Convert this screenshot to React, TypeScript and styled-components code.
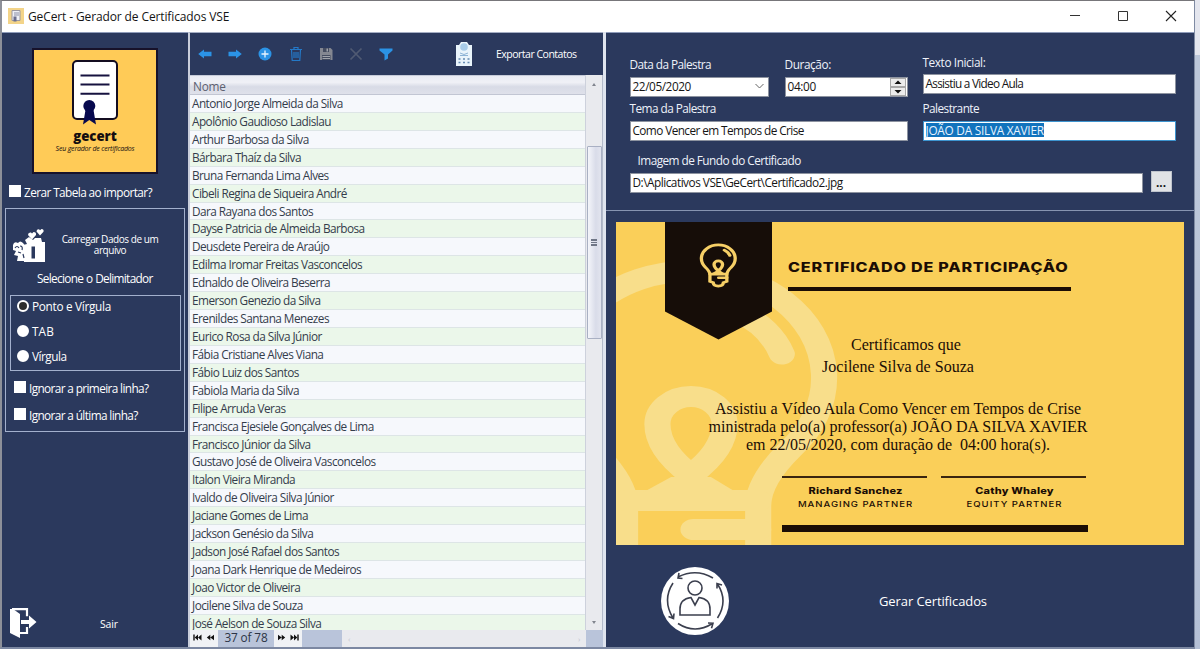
import React from 'react';
import styled, { createGlobalStyle } from 'styled-components';

const NAVY = '#2b395d';
const GOLD = '#facf59';
const INK = '#1b0d05';
const BLUE = '#2b93e6';

const GlobalStyle = createGlobalStyle`
  * { box-sizing: border-box; }
  body {
    margin: 0;
    overflow: hidden;
    font-family: "Open Sans", "Noto Sans", sans-serif;
    font-size: 11.8px;
    letter-spacing: -0.42px;
    color: #fff;
  }
`;

const Desktop = styled.div`
  width: 1200px;
  height: 649px;
  display: flex;
  background: linear-gradient(#e4e6ee 0 55px, #bcc7da 55px 150px, #b4c0d6 100%);
`;

const Window = styled.div`
  width: 1195px;
  height: 649px;
  display: flex;
  flex-direction: column;
  border: 1px solid #77767a;
  border-left: 2px solid #8d9099;
  border-right-color: #7f8ba3;
  border-bottom: 2px solid #7c88a2;
  background: ${NAVY};
`;

const TitleBar = styled.header`
  height: 31px;
  flex: none;
  display: flex;
  align-items: center;
  padding: 0 17px 1px 6px;
  background: #fff;
  color: #141414;
`;

const Title = styled.h1`
  flex: 1;
  margin: 0 0 0 4px;
  font-size: 12px;
  font-weight: 400;
  letter-spacing: -0.12px;
`;

const WindowButtons = styled.div`
  display: flex;
  gap: 36px;
  svg { display: block; }
`;

const Body = styled.div`
  flex: 1;
  min-height: 0;
  display: flex;
`;

const Sidebar = styled.aside`
  width: 186px;
  flex: none;
  display: flex;
  flex-direction: column;
  border-top: 1px solid #8f9cba;
`;

const Logo = styled.div`
  width: 126px;
  height: 126px;
  margin: 14.5px 0 0 30px;
  display: flex;
  flex-direction: column;
  align-items: center;
  border: 2px solid #17122a;
  background: #ffcb57;
  color: #140d10;
  svg { display: block; margin-top: 9px; }
`;

const LogoName = styled.div`
  font: 800 13.2px/16px "Open Sans", sans-serif;
  letter-spacing: -0.05px;
  margin-top: 3px;
`;

const LogoTagline = styled.div`
  font: italic 500 7px/10px "Open Sans", sans-serif;
  letter-spacing: -0.2px;
  white-space: nowrap;
`;

const Check = styled.label<{ $spacing?: number }>`
  display: flex;
  align-items: center;
  gap: 3px;
  height: 16px;
  white-space: nowrap;
  letter-spacing: ${p => p.$spacing ?? -0.62}px;
`;

const TopCheck = styled(Check)`
  margin: 10px 0 0 7px;
`;

const Box = styled.span`
  width: 12px;
  height: 12px;
  margin-top: -1px;
  background: #fff;
`;

const ImportPanel = styled.section`
  width: 180px;
  height: 224px;
  margin: 8px 0 0 3px;
  border: 1px solid #a3b0cd;
  display: flex;
  flex-direction: column;
`;

const ImportButton = styled.div`
  display: flex;
  align-items: center;
  height: 35px;
  margin: 19px 0 0 6px;
`;

const ImportText = styled.div`
  width: 124px;
  margin-left: 2px;
  text-align: center;
  font-size: 10px;
  line-height: 11.5px;
  letter-spacing: -0.44px;
`;

const DelimiterLabel = styled.div`
  margin: 7px 0 0 31px;
  line-height: 16px;
  letter-spacing: -0.68px;
  word-spacing: 0.4px;
  white-space: nowrap;
`;

const RadioBox = styled.div`
  width: 171px;
  height: 76px;
  margin: 9px 0 0 4px;
  padding: 2px 0 0 6px;
  border: 1px solid #a3b0cd;
  display: flex;
  flex-direction: column;
  gap: 9px;
  flex: none;
`;

const Dot = styled.span<{ $on?: boolean }>`
  width: 12px;
  height: 12px;
  border-radius: 50%;
  border: 2px solid #fff;
  background: ${p => (p.$on ? '#2e2e2e' : '#fff')};
`;

const PanelChecks = styled.div`
  margin: 9px 0 0 8px;
  display: flex;
  flex-direction: column;
  gap: 11px;
`;

const Exit = styled.div`
  margin: auto 0 8px 7px;
  display: flex;
  align-items: center;
  font-size: 10.5px;
  letter-spacing: -0.2px;
  svg { display: block; }
  span { margin: 2px 0 0 63px; }
`;

const ListPane = styled.main`
  width: 415px;
  flex: none;
  display: flex;
  flex-direction: column;
  border-left: 2px solid #c9cedb;
  border-top: 1px solid #a5aec4;
`;

const Toolbar = styled.div`
  height: 42px;
  flex: none;
  display: flex;
  align-items: center;
  padding-left: 7px;
  svg { display: block; flex: none; }
`;

const ToolIcons = styled.div`
  display: flex;
  gap: 14.2px;
  width: 258px;
`;

const ExportLabel = styled.span`
  margin-left: 23px;
  font-size: 10.5px;
  letter-spacing: -0.5px;
  white-space: nowrap;
`;

const GridArea = styled.div`
  flex: 1;
  min-height: 0;
  display: flex;
  background: #f7f9fb;
`;

const Names = styled.div`
  width: 395px;
  flex: none;
  overflow: hidden;
  color: #343c4b;
`;

const HeaderCell = styled.div`
  height: 20px;
  padding-left: 3px;
  line-height: 20px;
  letter-spacing: -0.25px;
  color: #5c6070;
  background: linear-gradient(#e9ebf3, #f0f1f6 35%, #d8dbe6 60%, #dfe1ea);
  border-top: 1px solid #c5cad8;
  border-bottom: 1px solid #c2c6d3;
`;

const NameRow = styled.div<{ $even: boolean }>`
  height: 17.93px;
  padding-left: 2px;
  line-height: 17.6px;
  letter-spacing: -0.54px;
  white-space: nowrap;
  background: ${p => (p.$even ? '#ebf7ea' : '#f6f8fc')};
  border-bottom: 1px solid #dde5e6;
`;

const VScroll = styled.div`
  width: 18px;
  display: flex;
  flex-direction: column;
  align-items: center;
  justify-content: space-between;
  padding: 8px 0 6px;
  border-left: 1px solid #cdd1dc;
  border-right: 1px solid #b3bac9;
  background: #e9eaee;
`;

const Thumb = styled.div`
  width: 15px;
  height: 193px;
  margin-top: 60px;
  margin-bottom: auto;
  display: flex;
  flex-direction: column;
  align-items: center;
  justify-content: center;
  gap: 1px;
  border: 1px solid #a9b0c3;
  border-radius: 1px;
  background: linear-gradient(90deg, #f4f5fa, #d9dce9 60%, #e2e4ee);
  i { width: 6px; height: 1.4px; background: #6f7686; }
`;

const Triangle = styled.span<{ $down?: boolean }>`
  border: 2.5px solid transparent;
  border-top-width: ${p => (p.$down ? 3 : 0)}px;
  border-bottom-width: ${p => (p.$down ? 0 : 3)}px;
  border-top-color: #81858e;
  border-bottom-color: #81858e;
`;

const Footer = styled.div`
  height: 17px;
  flex: none;
  display: flex;
  align-items: center;
  width: 413px;
  background: #b9c4da;
  color: #2c3445;
`;

const NavButtons = styled.div`
  width: 28px;
  height: 17px;
  display: flex;
  align-items: center;
  justify-content: space-evenly;
  background: #f0f2f5;
  svg { display: block; margin-top: -2px; }
`;

const Counter = styled.div`
  width: 56px;
  height: 17px;
  line-height: 15px;
  text-align: center;
  letter-spacing: -0.15px;
`;

const HScroll = styled.div`
  margin-left: 40px;
  width: 244px;
  height: 17px;
  padding: 0 6px;
  display: flex;
  align-items: center;
  justify-content: space-between;
  background: #e9eaee;
  color: #c3c6ce;
  font-size: 8px;
`;

const RightPane = styled.div`
  flex: 1;
  display: flex;
  flex-direction: column;
  border-left: 3px solid #dfe4ee;
`;

const Form = styled.form`
  height: 179px;
  flex: none;
  border-top: 1px solid #8f9cba;
  border-bottom: 1px solid #8794b1;
  padding: 24px 0 0 23.5px;
`;

const Columns = styled.div`
  display: grid;
  grid-template-columns: 278px 253px;
  column-gap: 15px;
  height: 85px;
`;

const Column = styled.div<{ $first: number }>`
  display: grid;
  grid-template-rows: ${p => p.$first}px 20px ${p => 44 - p.$first}px 20px;
`;

const Label = styled.div<{ $top?: number; $spacing?: number }>`
  padding-top: ${p => p.$top ?? 0}px;
  line-height: 16px;
  white-space: nowrap;
  color: #eef2fa;
  letter-spacing: ${p => p.$spacing ?? -0.54}px;
`;

const RaisedLabel = styled(Label)<{ $up: number }>`
  margin-top: -${p => p.$up}px;
`;

const ImageLabel = styled(Label)`
  margin: 10px 0 5px 8px;
`;

const Field = styled.div<{ $w?: number; $focus?: boolean; $spacing?: number }>`
  width: ${p => (p.$w ? `${p.$w}px` : '100%')};
  height: 20px;
  display: flex;
  align-items: center;
  justify-content: space-between;
  padding: 0 0 2px 2px;
  border: 1px solid ${p => (p.$focus ? '#3d94cf' : '#8d93a0')};
  background: #fff;
  color: #151515;
  white-space: nowrap;
  letter-spacing: ${p => p.$spacing ?? -0.36}px;
`;

const Pair = styled.div`
  display: grid;
  grid-template-columns: 139px 123px;
  column-gap: 16px;
`;

const Selected = styled.mark`
  background: #1173bd;
  color: #e8f4ff;
  line-height: 14px;
`;

const Spinner = styled.span`
  width: 17px;
  height: 18px;
  margin-bottom: -2px;
  display: flex;
  flex-direction: column;
  justify-content: space-between;
  svg { display: block; background: #ececec; border: 1px solid #a8a8a8; }
`;

const ImageRow = styled.div`
  display: flex;
  align-items: center;
  gap: 8px;
`;

const Browse = styled.div`
  width: 21px;
  height: 21px;
  margin-top: -3px;
  background: #e1e3e6;
  border: 1px solid #bfc4cc;
  color: #111;
  text-align: center;
  font-weight: 700;
  line-height: 21px;
  letter-spacing: 0;
`;

const Certificate = styled.article`
  position: relative;
  width: 568px;
  height: 323px;
  margin: 11px 0 0 10px;
  flex: none;
  overflow: hidden;
  background: ${GOLD};
  color: ${INK};
  letter-spacing: 0;
`;

const Backdrop = styled.svg`
  position: absolute;
  inset: 0;
`;

const CertContent = styled.div`
  position: relative;
  height: 100%;
`;

const Wide = styled.div<{ $size: number; $weight: number; $spacing: number }>`
  font-family: Inter, sans-serif;
  font-size: ${p => p.$size}px;
  font-weight: ${p => p.$weight};
  letter-spacing: ${p => p.$spacing}px;
  line-height: 14px;
  white-space: nowrap;
  transform: scaleX(1.24);
`;

const CertTitle = styled(Wide)`
  transform-origin: left;
  margin-left: 172px;
  padding-top: 38px;
`;

const Rule = styled.div<{ $w: number; $h: number }>`
  width: ${p => p.$w}px;
  height: ${p => p.$h}px;
  background: ${INK};
`;

const TitleRule = styled(Rule)`
  margin: 13px 0 43px 172px;
`;

const BottomRule = styled(Rule)`
  margin: 13px 0 0 166px;
`;

const Serif = styled.p<{ $lh: number; $shift?: number }>`
  margin: 0;
  width: 564px;
  padding-left: ${p => p.$shift ?? 0}px;
  text-align: center;
  white-space: pre;
  font-family: "Liberation Serif", serif;
  font-size: 16.05px;
  line-height: ${p => p.$lh}px;
`;

const Message = styled(Serif)`
  margin-top: 22px;
`;

const Signatures = styled.div`
  display: flex;
  gap: 14px;
  margin: 22px 0 0 166px;
`;

const Signature = styled.div`
  width: 145px;
  border-top: 2px solid #3a250f;
  padding: 6px 0 0 2px;
  text-align: center;
`;

const Generate = styled.div`
  flex: 1;
  display: flex;
  align-items: center;
  padding: 9px 0 0 54px;
  font-size: 13px;
  letter-spacing: -0.1px;
  svg { display: block; }
  span { margin-left: 149px; }
`;

const names = [
  'Antonio Jorge Almeida da Silva', 'Apolônio Gaudioso Ladislau', 'Arthur Barbosa da Silva',
  'Bárbara Thaíz da Silva', 'Bruna Fernanda Lima Alves', 'Cibeli Regina de Siqueira André',
  'Dara Rayana dos Santos', 'Dayse Patricia de Almeida Barbosa', 'Deusdete Pereira de Araújo',
  'Edilma Iromar Freitas Vasconcelos', 'Ednaldo de Oliveira Beserra', 'Emerson Genezio da Silva',
  'Erenildes Santana Menezes', 'Eurico Rosa da Silva Júnior', 'Fábia Cristiane Alves Viana',
  'Fábio Luiz dos Santos', 'Fabiola Maria da Silva', 'Filipe Arruda Veras',
  'Francisca Ejesiele Gonçalves de Lima', 'Francisco Júnior da Silva',
  'Gustavo José de Oliveira Vasconcelos', 'Italon Vieira Miranda', 'Ivaldo de Oliveira Silva Júnior',
  'Jaciane Gomes de Lima', 'Jackson Genésio da Silva', 'Jadson José Rafael dos Santos',
  'Joana Dark Henrique de Medeiros', 'Joao Victor de Oliveira', 'Jocilene Silva de Souza',
  'José Aelson de Souza Silva',
];

const Bulb = ({ x, y, scale, color }: { x: number; y: number; scale: number; color: string }) => (
  <g
    transform={`translate(${x} ${y}) scale(${1.244 * scale} ${scale})`}
    fill="none"
    stroke={color}
    strokeWidth="21"
    strokeLinecap="round"
  >
    <path d="M-53 128 C-53 108 -66 88 -80 71 A107 107 0 1 1 80 71 C66 88 54 108 54 128 V180 L32 190 Q30 217 0 217 Q-30 217 -32 190 L-53 180 Z" />
    <path d="M-53 122.5 H54 M2 151.5 H54" />
    <path d="M0 97 C-14 84 -27 66 -27 46 A27 27.500 0 0 1 27 46 C27 66 14 84 0 97" />
    <path d="M-16 99 H16 L36 114 H-38 Z" fill={color} stroke="none" />
    <path d="M38 -66 A76 76 0 0 1 73 -24" />
  </g>
);

const DoubleArrow = ({ flip, end }: { flip?: boolean; end?: boolean }) => (
  <svg width="9" height="7" viewBox="0 0 9 7" fill="#111">
    <g transform={flip ? 'translate(9 0) scale(-1 1)' : undefined}>
      {end && <path d="M.3 .5h1.4v6H.3z" />}
      <path d={end ? 'M5 .5v6L1.7 3.5zM8.5 .5v6L5 3.5z' : 'M4.3 .8v5.4L.8 3.5zM8 .8v5.4L4.3 3.5z'} />
    </g>
  </svg>
);

export default function App() {
  return (
    <>
      <GlobalStyle />
      <Desktop>
        <Window>
          <TitleBar>
            <svg width="16" height="16" viewBox="0 0 16 16">
              <path d="M0 0h16v16H0z" fill="#f3d489" />
              <path d="M4 2.5h8v10H4z" fill="#eef0f6" stroke="#9b98a0" />
              <path d="M6 5h5M6 7h5" stroke="#8b8fa6" />
              <path d="M5.5 8.5h3v5h-3z" fill="#6b6f8e" />
            </svg>
            <Title>GeCert - Gerador de Certificados VSE</Title>
            <WindowButtons>
              <svg width="12" height="12" viewBox="0 0 12 12"><path d="M1 5.500h10" stroke="#333" /></svg>
              <svg width="12" height="12" viewBox="0 0 12 12"><path d="M1.500 1.500h9v9h-9z" fill="none" stroke="#333" /></svg>
              <svg width="12" height="12" viewBox="0 0 12 12"><path d="M1 1l10 10M11 1L1 11" stroke="#222" strokeWidth="1.100" /></svg>
            </WindowButtons>
          </TitleBar>
          <Body>
            <Sidebar>
              <Logo>
                <svg width="48" height="66" viewBox="0 0 48 66">
                  <rect x="2" y="2" width="44" height="58" rx="4" fill="#fff" stroke="#140d20" strokeWidth="2" />
                  <path d="M9.500 16.500h29M9.500 25.500h29M9.500 34.800h29" stroke="#16123f" strokeWidth="2" />
                  <circle cx="18.300" cy="47" r="6" fill="#07094e" />
                  <path d="M14.500 51h8l2.500 14.500-6.700-4.500L12 65.500z" fill="#07094e" />
                </svg>
                <LogoName>gecert</LogoName>
                <LogoTagline>Seu gerador de certificados</LogoTagline>
              </Logo>
              <TopCheck $spacing={-0.58}><Box />Zerar Tabela ao importar?</TopCheck>
              <ImportPanel>
                <ImportButton>
                  <svg width="34" height="34" viewBox="0 0 34 34" fill="#fff">
                    <path d="M11 17l4-1-2-4 4-3 4 3 2-2h6l1 4h3v20H12z" />
                    <path d="M19.500 18.500h3.500v12h-3.500z" fill={NAVY} />
                    <path d="M1 17q1-4 5-2 2-3 5 0l3 4-1 14H5l1-5-4-1 2-4-3-1z" />
                    <path d="M3 20q2-3 4 0M8 18q3 0 2 4M6 24l3 1M11 26l1 4" stroke={NAVY} fill="none" strokeWidth="1.200" />
                    <path d="M20 11.500l-4-4.500q0-3 3-2.500l1 1 1.500-1.500q3 0 2.500 3z" />
                    <path d="M28 7.500l-3.500-4q0-2.500 2.500-2.300l1 1 1.500-1.200q2.600 0 2 2.800z" />
                  </svg>
                  <ImportText>Carregar Dados de um arquivo</ImportText>
                </ImportButton>
                <DelimiterLabel>Selecione o Delimitador</DelimiterLabel>
                <RadioBox>
                  <Check $spacing={-0.3}><Dot $on />Ponto e Vírgula</Check>
                  <Check $spacing={0.1}><Dot />TAB</Check>
                  <Check $spacing={-0.5}><Dot />Vírgula</Check>
                </RadioBox>
                <PanelChecks>
                  <Check><Box />Ignorar a primeira linha?</Check>
                  <Check><Box />Ignorar a última linha?</Check>
                </PanelChecks>
              </ImportPanel>
              <Exit>
                <svg width="28" height="32" viewBox="0 0 28 32">
                  <path d="M1 2h3l7 5v24L1 26z" fill="#fff" />
                  <path d="M3 2.200h15v7M18 20v6h-7" fill="none" stroke="#fff" strokeWidth="2.200" />
                  <path d="M12 13h8V8.500l7.500 6.500-7.500 6.500V17h-8z" fill="#fff" />
                </svg>
                <span>Sair</span>
              </Exit>
            </Sidebar>
            <ListPane>
              <Toolbar>
                <ToolIcons>
                  <svg width="16" height="16" viewBox="0 0 16 16" fill={BLUE}><path d="M1.200 8L7 3.500v2.300h7.500v4.400H7v2.300z" /></svg>
                  <svg width="16" height="16" viewBox="0 0 16 16" fill={BLUE}><path d="M14.800 8L9 3.500v2.300H1.500v4.400H9v2.300z" /></svg>
                  <svg width="16" height="16" viewBox="0 0 16 16"><circle cx="8" cy="8" r="6.500" fill={BLUE} /><path d="M8 4.500v7M4.500 8h7" stroke="#e8f4ff" strokeWidth="1.300" /></svg>
                  <svg width="16" height="16" viewBox="0 0 16 16" fill="none" stroke="#2479c8"><path d="M2 3.500h12M6 3.500v-2h4v2M3.500 3.500l.7 11h7.600l.7-11M6 6v6M8 6v6M10 6v6" strokeWidth="1.200" /></svg>
                  <svg width="16" height="16" viewBox="0 0 16 16"><path d="M2 2h10.500L14.500 4v10H2z" fill="#848791" /><path d="M5 2h6v4H5zM4 9h8.500v5H4z" fill="#454c60" /><path d="M8.500 2.500h1.500v3H8.500zM4.500 10h7.500v1h-7.500zM4.500 12h7.500v1h-7.500z" fill="#a0a3ab" /></svg>
                  <svg width="16" height="16" viewBox="0 0 16 16"><path d="M2.500 2.500l11 11M13.500 2.500l-11 11" stroke="#505a72" strokeWidth="1.700" /></svg>
                  <svg width="16" height="16" viewBox="0 0 16 16" fill={BLUE}><path d="M1.500 2.500h13v2l-4.500 4v4L6.500 14.500v-6L1.500 4.500z" /></svg>
                </ToolIcons>
                <svg width="18" height="26" viewBox="0 0 18 26">
                  <path d="M1 4h3l2-3h6l2 3h3v21H1z" fill="#e9f4fb" />
                  <circle cx="9" cy="6" r="3.800" fill="#a8cce9" />
                  <path d="M5 12q4 3 8 0M5 14.500h8" stroke="#8eb4d6" fill="none" />
                  <path d="M3.500 18h2M8 18h2M12.500 18h2M3.500 21.500h2M8 21.500h2M12.500 21.500h2" stroke="#668bb3" strokeWidth="1.600" />
                </svg>
                <ExportLabel>Exportar Contatos</ExportLabel>
              </Toolbar>
              <GridArea>
                <Names>
                  <HeaderCell>Nome</HeaderCell>
                  {names.map((n, i) => <NameRow key={n} $even={i % 2 === 1}>{n}</NameRow>)}
                </Names>
                <VScroll>
                  <Triangle />
                  <Thumb><i /><i /><i /></Thumb>
                  <Triangle $down />
                </VScroll>
              </GridArea>
              <Footer>
                <NavButtons><DoubleArrow end /><DoubleArrow /></NavButtons>
                <Counter>37 of 78</Counter>
                <NavButtons><DoubleArrow flip /><DoubleArrow flip end /></NavButtons>
                <HScroll><span>‹</span><span>›</span></HScroll>
              </Footer>
            </ListPane>
            <RightPane>
              <Form>
                <Columns>
                  <Column $first={20}>
                    <Pair>
                      <RaisedLabel $up={1}>Data da Palestra</RaisedLabel>
                      <RaisedLabel $up={1} $spacing={-0.4}>Duração:</RaisedLabel>
                    </Pair>
                    <Pair>
                      <Field $spacing={-0.42}>
                        <span>22/05/2020</span>
                        <svg width="16" height="10" viewBox="0 0 16 10"><path d="M3.500 3L7.500 7l4-4" fill="none" stroke="#666" /></svg>
                      </Field>
                      <Field>
                        <span>04:00</span>
                        <Spinner>
                          <svg width="16" height="9" viewBox="0 0 14 7"><path d="M3.500 5L7 1.500 10.500 5z" fill="#111" /></svg>
                          <svg width="16" height="9" viewBox="0 0 14 7"><path d="M3.500 2L7 5.500 10.500 2z" fill="#111" /></svg>
                        </Spinner>
                      </Field>
                    </Pair>
                    <Label $top={3}>Tema da Palestra</Label>
                    <Field $spacing={-0.58}>Como Vencer em Tempos de Crise</Field>
                  </Column>
                  <Column $first={17}>
                    <RaisedLabel $up={3} $spacing={-0.4}>Texto Inicial:</RaisedLabel>
                    <Field $spacing={-0.72}>Assistiu a Video Aula</Field>
                    <Label $top={6}>Palestrante</Label>
                    <Field $focus $spacing={-0.24}><Selected>JOÃO DA SILVA XAVIER</Selected></Field>
                  </Column>
                </Columns>
                <ImageLabel>Imagem de Fundo do Certificado</ImageLabel>
                <ImageRow>
                  <Field $w={513} $spacing={-0.49}>D:\Aplicativos VSE\GeCert\Certificado2.jpg</Field>
                  <Browse>...</Browse>
                </ImageRow>
              </Form>
              <Certificate>
                <Backdrop width="568" height="323" viewBox="0 0 568 323">
                  <Bulb x={75} y={156} scale={1} color="#f8de8b" />
                  <path d="M49 0h107v89.500l-53.500 28L49 89.500z" fill="#160d08" />
                  <Bulb x={102.300} y={36.500} scale={0.127} color="#f6cf66" />
                </Backdrop>
                <CertContent>
                  <CertTitle $size={13} $weight={800} $spacing={0.63}>CERTIFICADO DE PARTICIPAÇÃO</CertTitle>
                  <TitleRule $w={283} $h={4} />
                  <Serif $lh={22} $shift={16}>Certificamos que</Serif>
                  <Serif $lh={22}>Jocilene Silva de Souza</Serif>
                  <Message $lh={18}>{'Assistiu a Vídeo Aula Como Vencer em Tempos de Crise\nministrada pelo(a) professor(a) JOÃO DA SILVA XAVIER\nem 22/05/2020, com duração de  04:00 hora(s).'}</Message>
                  <Signatures>
                    <Signature>
                      <Wide $size={8.8} $weight={800} $spacing={0.2}>Richard Sanchez</Wide>
                      <Wide $size={7.7} $weight={500} $spacing={0.8}>MANAGING PARTNER</Wide>
                    </Signature>
                    <Signature>
                      <Wide $size={8.8} $weight={800} $spacing={0.2}>Cathy Whaley</Wide>
                      <Wide $size={7.7} $weight={500} $spacing={0.8}>EQUITY PARTNER</Wide>
                    </Signature>
                  </Signatures>
                  <BottomRule $w={306} $h={7} />
                </CertContent>
              </Certificate>
              <Generate>
                <svg width="70" height="70" viewBox="0 0 70 70" fill="none" stroke="#3b3f4e" strokeWidth="1.600">
                  <circle cx="35" cy="35" r="34" fill="#fff" stroke="none" />
                  <circle cx="35" cy="22" r="7" />
                  <path d="M20 49V43q0-10 11-11.500l4 7.500 4-7.500q11 1.500 11 11.500v6z" />
                  <path d="M53 12Q36 2 18 11M22.500 12.500L18 12l1-5M13 17Q2 34 13 52M8.500 50.500l5 2 .5-5M18 57.500q17 11 34.500 0M48 57l5 .3-1.500 5M57.500 52q11-17 0-34M57 22.500v-5l5 1.500" />
                </svg>
                <span>Gerar Certificados</span>
              </Generate>
            </RightPane>
          </Body>
        </Window>
      </Desktop>
    </>
  );
}
